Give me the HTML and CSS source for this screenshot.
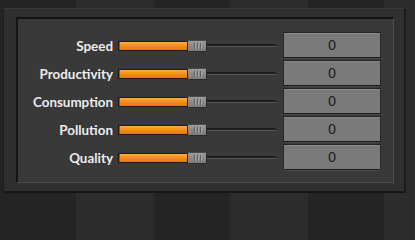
FILE: index.html
```html
<!DOCTYPE html>
<html>
<head>
<meta charset="utf-8">
<link rel="stylesheet" href="styles.css">
</head>
<body>
<div class="frame">
  <div class="panel">
    <div class="row">
      <div class="label">Speed</div>
      <div class="slider"><div class="fill"></div><div class="thumb"><i></i><i></i><i></i></div><div class="track"></div></div>
      <div class="box">0</div>
    </div>
    <div class="row">
      <div class="label">Productivity</div>
      <div class="slider"><div class="fill"></div><div class="thumb"><i></i><i></i><i></i></div><div class="track"></div></div>
      <div class="box">0</div>
    </div>
    <div class="row">
      <div class="label">Consumption</div>
      <div class="slider"><div class="fill"></div><div class="thumb"><i></i><i></i><i></i></div><div class="track"></div></div>
      <div class="box">0</div>
    </div>
    <div class="row">
      <div class="label">Pollution</div>
      <div class="slider"><div class="fill"></div><div class="thumb"><i></i><i></i><i></i></div><div class="track"></div></div>
      <div class="box">0</div>
    </div>
    <div class="row">
      <div class="label">Quality</div>
      <div class="slider"><div class="fill"></div><div class="thumb"><i></i><i></i><i></i></div><div class="track"></div></div>
      <div class="box">0</div>
    </div>
  </div>
</div>
</body>
</html>
```
FILE: styles.css
```css
html, body {
  margin: 0;
  padding: 0;
}
body {
  width: 415px;
  height: 205px;
  overflow: hidden;
  background: repeating-linear-gradient(90deg, #242424 0, #242424 76px, #2c2c2c 76px, #2c2c2c 154px);
  padding-top: 8px;
  box-sizing: border-box;
  font-family: Lato, "Open Sans", sans-serif;
}
.frame {
  margin-left: 3px;
  width: 403px;
  height: 185px;
  box-sizing: border-box;
  background: #2f2f2f;
  border-left: 1px solid #1b1b1b;
  border-right: 2px solid #1c1c1c;
  border-bottom: 2px solid #161616;
  border-top: 1px solid #3a3a3a;
  padding: 8px 10px 0 12px;
}
.panel {
  width: 378px;
  height: 166px;
  box-sizing: border-box;
  background: #393939;
  border-top: 2px solid #131313;
  border-left: 2px solid #161616;
  border-right: 1px solid #4c4c4c;
  border-bottom: 1px solid #4a4a4a;
  padding: 13px 12px 0 0;
  display: flex;
  flex-direction: column;
  gap: 2px;
}
.row {
  display: flex;
  align-items: center;
  height: 26px;
}
.label {
  width: 95px;
  text-align: right;
  color: #ececec;
  font-weight: 700;
  font-size: 13.4px;
  margin-right: 5px;
  padding-top: 1px;
}
.slider {
  display: flex;
  align-items: center;
  width: 159px;
  height: 12px;
  margin-right: 6px;
  margin-top: 1px;
}
.fill {
  width: 68px;
  height: 8px;
  background: linear-gradient(#ffad45, #f7911e 40%, #e07a10);
  border: 1px solid #1a1a1a;
  border-right: none;
  box-shadow: inset 1px 0 0 #8a5a20;
}
.thumb {
  width: 20px;
  height: 12px;
  box-sizing: border-box;
  background: linear-gradient(#9c9c9c, #8a8a8a 50%, #7c7c7c);
  border: 1px solid #2a2a2a;
  border-top-color: #4a4a4a;
  display: flex;
  justify-content: center;
  align-items: center;
  gap: 2px;
}
.thumb i {
  display: block;
  width: 1px;
  height: 6px;
  background: #5c5c5c;
  box-shadow: 1px 0 0 #aaaaaa;
}
.track {
  flex: 1;
  height: 2px;
  background: #1e1e1e;
  border-bottom: 1px solid #555;
  margin-right: 1px;
}
.box {
  width: 98px;
  height: 26px;
  box-sizing: border-box;
  background: #7a7a7a;
  border: 1px solid #262626;
  border-bottom-color: #1c1c1c;
  box-shadow: inset 0 1px 0 #8a8a8a, 0 1px 0 #4a4a4a;
  border-radius: 1px;
  color: #1e1e1e;
  font-family: "DejaVu Sans", sans-serif;
  font-size: 13.5px;
  display: flex;
  align-items: center;
  justify-content: center;
}
```
